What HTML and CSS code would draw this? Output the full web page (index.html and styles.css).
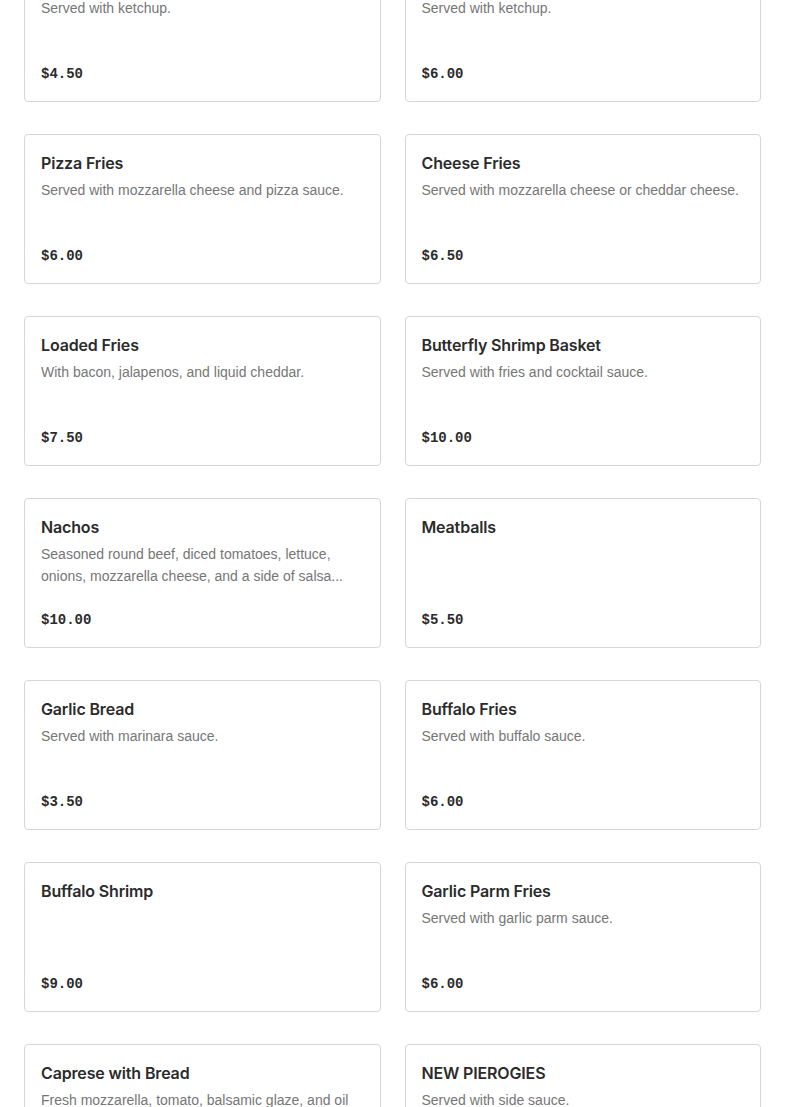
FILE: index.html
```html
<!DOCTYPE html>
<html>
<head>
<meta charset="utf-8">
<link rel="stylesheet" href="styles.css">
</head>
<body>
<div class="menu">
  <div class="card"><div class="title">French Fries</div><div class="desc">Served with ketchup.</div><div class="price">$4.50</div></div>
  <div class="card"><div class="title">Curly Fries</div><div class="desc">Served with ketchup.</div><div class="price">$6.00</div></div>
  <div class="card"><div class="title">Pizza Fries</div><div class="desc">Served with mozzarella cheese and pizza sauce.</div><div class="price">$6.00</div></div>
  <div class="card"><div class="title">Cheese Fries</div><div class="desc">Served with mozzarella cheese or cheddar cheese.</div><div class="price">$6.50</div></div>
  <div class="card"><div class="title">Loaded Fries</div><div class="desc">With bacon, jalapenos, and liquid cheddar.</div><div class="price">$7.50</div></div>
  <div class="card"><div class="title">Butterfly Shrimp Basket</div><div class="desc">Served with fries and cocktail sauce.</div><div class="price">$10.00</div></div>
  <div class="card"><div class="title">Nachos</div><div class="desc">Seasoned round beef, diced tomatoes, lettuce, onions, mozzarella cheese, and a side of salsa...</div><div class="price">$10.00</div></div>
  <div class="card"><div class="title">Meatballs</div><div class="desc"></div><div class="price">$5.50</div></div>
  <div class="card"><div class="title">Garlic Bread</div><div class="desc">Served with marinara sauce.</div><div class="price">$3.50</div></div>
  <div class="card"><div class="title">Buffalo Fries</div><div class="desc">Served with buffalo sauce.</div><div class="price">$6.00</div></div>
  <div class="card"><div class="title">Buffalo Shrimp</div><div class="desc"></div><div class="price">$9.00</div></div>
  <div class="card"><div class="title">Garlic Parm Fries</div><div class="desc">Served with garlic parm sauce.</div><div class="price">$6.00</div></div>
  <div class="card"><div class="title">Caprese with Bread</div><div class="desc">Fresh mozzarella, tomato, balsamic glaze, and oil served with toasted bread.</div><div class="price">$9.00</div></div>
  <div class="card"><div class="title">NEW PIEROGIES</div><div class="desc">Served with side sauce.</div><div class="price">$8.00</div></div>
</div>
</body>
</html>
```

FILE: styles.css
```css
html, body {
  margin: 0;
  padding: 0;
  background: #ffffff;
}
body {
  font-family: Inter, "Noto Sans", "Liberation Sans", sans-serif;
  color: #2b2b2b;
}
.menu {
  display: grid;
  grid-template-columns: 1fr 1fr;
  column-gap: 24px;
  row-gap: 32px;
  padding: 0 24px;
  margin-top: -48px;
}
.card {
  box-sizing: border-box;
  height: 150px;
  border: 1px solid #d6d6d6;
  border-radius: 4px;
  padding: 16px;
  display: flex;
  flex-direction: column;
  background: #fff;
}
.title {
  font-size: 16px;
  line-height: 24px;
  font-weight: 600;
  letter-spacing: -0.15px;
  color: #2b2b2b;
  white-space: nowrap;
  overflow: hidden;
  text-overflow: ellipsis;
}
.desc {
  margin-top: 4px;
  font-family: "Liberation Sans", Arial, sans-serif;
  font-size: 14px;
  line-height: 22px;
  color: #767676;
  display: -webkit-box;
  -webkit-line-clamp: 2;
  -webkit-box-orient: vertical;
  overflow: hidden;
}
.price {
  margin-top: auto;
  font-family: "Liberation Mono", "DejaVu Sans Mono", monospace;
  font-weight: 700;
  font-size: 14px;
  line-height: 22px;
  color: #2b2b2b;
}
```
